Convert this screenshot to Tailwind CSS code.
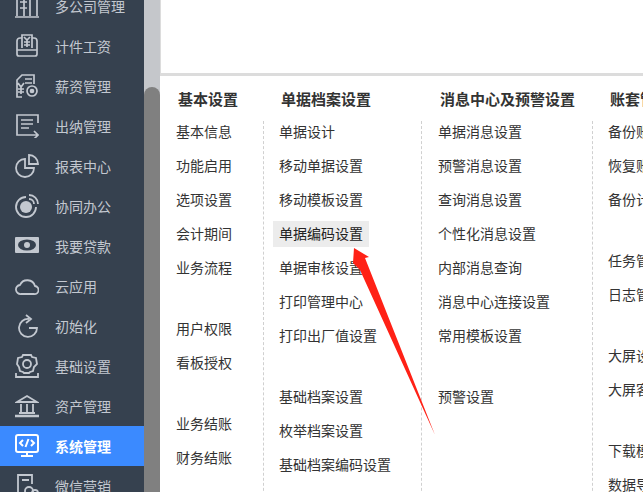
<!DOCTYPE html>
<html lang="zh">
<head>
  <meta charset="UTF-8">
  <title>系统管理</title>
  <script src="https://cdn.jsdelivr.net/npm/@tailwindcss/browser@4"></script>
</head>
<body class="relative h-[492px] w-[643px] overflow-hidden bg-white font-['Liberation_Sans','Noto_Sans_CJK_SC',sans-serif] text-[14px] text-[#333]">
  <div class="flex h-[492px]">

    <!-- Sidebar -->
    <aside class="-mt-[14px] h-[506px] w-[144px] shrink-0 bg-[#36414f] text-[#c3c8d0]">
      <div class="flex h-10 items-center pl-[15px]">
        <svg class="mr-[16px] size-6" viewBox="0 0 24 24" fill="none" stroke="currentColor" stroke-width="1.700"><path d="M0 23h24M2 22V1h20v21M9 1v21M15 1v21M5 8h7M5 14h7"/></svg>
        <span class="pt-[2px]">多公司管理</span>
      </div>
      <div class="flex h-10 items-center pl-[15px]">
        <svg class="mr-[16px] size-6" viewBox="0 0 24 24" fill="none" stroke="currentColor" stroke-width="1.700"><path d="M7 1h10v3h2a3 3 0 0 1 3 3v13a2 2 0 0 1-2 2H4a2 2 0 0 1-2-2V7a3 3 0 0 1 3-3h2zM7 4v10M17 4v10M2 16h20M9 3l3 3 3-3M12 6v7M9 8h6M9 11h6"/></svg>
        <span class="pt-[2px]">计件工资</span>
      </div>
      <div class="flex h-10 items-center pl-[15px]">
        <svg class="mr-[16px] size-6" viewBox="0 0 24 24" fill="none" stroke="currentColor" stroke-width="1.700"><path d="M7 23H2V6l5-5h12v9M10 5h7M10 9h7M3 9l3 4 3-4M6 13v7M3 15h6M3 18h6"/><circle cx="17" cy="17" r="5"/><circle cx="17" cy="17" r="1.500" fill="currentColor"/></svg>
        <span class="pt-[2px]">薪资管理</span>
      </div>
      <div class="flex h-10 items-center pl-[15px]">
        <svg class="mr-[16px] size-6" viewBox="0 0 24 24" fill="none" stroke="currentColor" stroke-width="1.700"><path d="M23 9V1H2v20h13M6 6h12M6 10h12M6 14h8M13 21h10M19 17l4 4-4 4"/></svg>
        <span class="pt-[2px]">出纳管理</span>
      </div>
      <div class="flex h-10 items-center pl-[15px]">
        <svg class="mr-[16px] size-6" viewBox="0 0 24 24" fill="none" stroke="currentColor" stroke-width="1.800"><path d="M10 5a9 9 0 1 0 9 9h-9zM14 1a9 9 0 0 1 9 9h-9z"/></svg>
        <span class="pt-[2px]">报表中心</span>
      </div>
      <div class="flex h-10 items-center pl-[15px]">
        <svg class="mr-[16px] size-6" viewBox="0 0 24 24" fill="none" stroke="currentColor" stroke-width="1.800"><path d="M11 3a10 10 0 1 0 10 10"/><circle cx="11" cy="13" r="6" fill="currentColor" stroke="none"/><path d="M14 1a9 9 0 0 1 9 9M14 5a5 5 0 0 1 5 5"/></svg>
        <span class="pt-[2px]">协同办公</span>
      </div>
      <div class="flex h-10 items-center pl-[15px]">
        <svg class="mr-[16px] size-6" viewBox="0 0 24 24"><rect x="0" y="3" width="24" height="16" rx="1" fill="currentColor"/><ellipse cx="12" cy="11" rx="9" ry="5.500" fill="#36414f"/><circle cx="12" cy="11" r="3" fill="currentColor"/></svg>
        <span class="pt-[2px]">我要贷款</span>
      </div>
      <div class="flex h-10 items-center pl-[15px]">
        <svg class="mr-[16px] size-6" viewBox="0 0 24 24" fill="none" stroke="currentColor" stroke-width="1.800"><path d="M6 20a4.500 4.500 0 0 1-1-9 8 8 0 0 1 15 1 4 4 0 0 1-1 8z"/></svg>
        <span class="pt-[2px]">云应用</span>
      </div>
      <div class="flex h-10 items-center pl-[15px]">
        <svg class="mr-[16px] size-6" viewBox="0 0 24 24" fill="none" stroke="currentColor" stroke-width="1.800"><path d="M14 5A9 9 0 1 0 22 14h-8M11 1l5 4-5 4"/></svg>
        <span class="pt-[2px]">初始化</span>
      </div>
      <div class="flex h-10 items-center pl-[15px]">
        <svg class="mr-[16px] size-6" viewBox="0 0 24 24" fill="none" stroke="currentColor" stroke-width="1.800"><path d="M8 1h8l1 2 4 1 1 6-3 3-1 4-3 1-1 1H9l-1-1-3-1-1-4-2-3 1-6 4-1zM1 19v4h22v-4"/><circle cx="12" cy="10" r="4"/></svg>
        <span class="pt-[2px]">基础设置</span>
      </div>
      <div class="flex h-10 items-center pl-[15px]">
        <svg class="mr-[16px] size-6" viewBox="0 0 24 24" fill="none" stroke="currentColor" stroke-width="1.800"><path d="M2 8l10-6 10 6zM6 10v8M12 10v8M18 10v8M4 19h16"/><path d="M0 22h24" stroke-width="2.500"/></svg>
        <span class="pt-[2px]">资产管理</span>
      </div>
      <div class="flex h-10 items-center bg-[#3b8aff] pl-[15px] font-bold text-white">
        <svg class="mr-[16px] size-6" viewBox="0 0 24 24" fill="none" stroke="currentColor" stroke-width="2"><rect x="1" y="1" width="22" height="17" rx="2"/><path d="M12 18v4M6 22h12M8 6l-3 3 3 3M16 6l3 3-3 3M13.500 5l-3 8"/></svg>
        <span class="pt-[2px]">系统管理</span>
      </div>
      <div class="flex h-10 items-center pl-[15px]">
        <svg class="mr-[16px] size-6" viewBox="0 0 24 24" fill="none" stroke="currentColor" stroke-width="1.800"><path d="M10 23H3V1h14v9M7 6h7"/><circle cx="14" cy="17" r="4"/><circle cx="20" cy="19" r="3"/></svg>
        <span class="pt-[2px]">微信营销</span>
      </div>
    </aside>

    <!-- Scrollbar track -->
    <div class="flex h-full w-4 shrink-0 flex-col bg-[#c5c7cb] pt-[87px]">
      <div class="flex-1 rounded-t-lg bg-[#808080]"></div>
    </div>

    <!-- Main -->
    <main class="min-w-0 flex-1 overflow-hidden">
      <div class="h-[76px] border-b-[3px] border-l border-[#dcdcdc]"></div>
      <div class="flex whitespace-nowrap pt-[14px]">

        <section class="w-[103px] shrink-0">
          <h2 class="pl-[18px] text-[15px] leading-5 font-bold">基本设置</h2>
          <ul class="mt-[11px] flex flex-col pl-[16px]">
            <li class="mb-[6px] flex h-[22px] items-center">基本信息</li>
            <li class="flex h-[34px] items-center">功能启用</li>
            <li class="flex h-[34px] items-center">选项设置</li>
            <li class="flex h-[34px] items-center">会计期间</li>
            <li class="flex h-[34px] items-center">业务流程</li>
            <li class="mt-[27px] flex h-[34px] items-center">用户权限</li>
            <li class="flex h-[34px] items-center">看板授权</li>
            <li class="mt-[27px] flex h-[34px] items-center">业务结账</li>
            <li class="flex h-[34px] items-center">财务结账</li>
          </ul>
        </section>

        <section class="w-[158px] shrink-0">
          <h2 class="pl-[18px] text-[15px] leading-5 font-bold">单据档案设置</h2>
          <ul class="mt-[11px] flex h-[400px] flex-col border-l border-dashed border-[#d0d0d0] pl-[9px]">
            <li class="mb-[6px] flex h-[22px] items-center px-[6px]">单据设计</li>
            <li class="flex h-[34px] items-center px-[6px]">移动单据设置</li>
            <li class="flex h-[34px] items-center px-[6px]">移动模板设置</li>
            <li class="my-[4px] flex h-[26px] w-[96px] items-center bg-[#ececec] px-[6px] text-[#222]">单据编码设置</li>
            <li class="flex h-[34px] items-center px-[6px]">单据审核设置</li>
            <li class="flex h-[34px] items-center px-[6px]">打印管理中心</li>
            <li class="flex h-[34px] items-center px-[6px]">打印出厂值设置</li>
            <li class="mt-[27px] flex h-[34px] items-center px-[6px]">基础档案设置</li>
            <li class="flex h-[34px] items-center px-[6px]">枚举档案设置</li>
            <li class="flex h-[34px] items-center px-[6px]">基础档案编码设置</li>
          </ul>
        </section>

        <section class="w-[171px] shrink-0">
          <h2 class="pl-[19px] text-[15px] leading-5 font-bold">消息中心及预警设置</h2>
          <ul class="mt-[11px] flex h-[400px] flex-col border-l border-dashed border-[#d0d0d0] pl-[16px]">
            <li class="mb-[6px] flex h-[22px] items-center">单据消息设置</li>
            <li class="flex h-[34px] items-center">预警消息设置</li>
            <li class="flex h-[34px] items-center">查询消息设置</li>
            <li class="flex h-[34px] items-center">个性化消息设置</li>
            <li class="flex h-[34px] items-center">内部消息查询</li>
            <li class="flex h-[34px] items-center">消息中心连接设置</li>
            <li class="flex h-[34px] items-center">常用模板设置</li>
            <li class="mt-[27px] flex h-[34px] items-center">预警设置</li>
          </ul>
        </section>

        <section class="w-[100px] shrink-0">
          <h2 class="pl-[18px] text-[15px] leading-5 font-bold">账套管理</h2>
          <ul class="mt-[11px] flex h-[400px] flex-col border-l border-dashed border-[#d0d0d0] pl-[15px]">
            <li class="mb-[6px] flex h-[22px] items-center">备份账套</li>
            <li class="flex h-[34px] items-center">恢复账套</li>
            <li class="flex h-[34px] items-center">备份计划</li>
            <li class="mt-[27px] flex h-[34px] items-center">任务管理</li>
            <li class="flex h-[34px] items-center">日志管理</li>
            <li class="mt-[27px] flex h-[34px] items-center">大屏设置</li>
            <li class="flex h-[34px] items-center">大屏客户端</li>
            <li class="mt-[27px] flex h-[34px] items-center">下载模板</li>
            <li class="flex h-[34px] items-center">数据导入</li>
          </ul>
        </section>
      </div>
    </main>
  </div>

  <!-- Red annotation arrow over the page -->
  <svg class="pointer-events-none absolute top-0 left-0" width="643" height="492" viewBox="0 0 643 492">
    <path d="M354 248L369 257L365 258L435 435L360 270L353 263Z" fill="#ff2116"/>
  </svg>
</body>
</html>
